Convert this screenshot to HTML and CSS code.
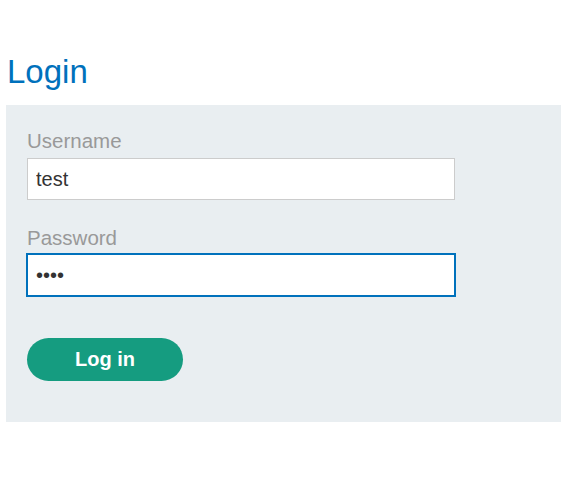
FILE: index.html
```html
<!DOCTYPE html>
<html>
<head>
<meta charset="utf-8">
<link rel="stylesheet" href="styles.css">
</head>
<body>
<div class="page">
  <h1 class="title">Login</h1>
  <form class="panel">
    <label class="label" for="u">Username</label>
    <input class="field" id="u" type="text" value="test">
    <label class="label label-2" for="p">Password</label>
    <input class="field field-focus" id="p" type="password" value="test">
    <button class="btn" type="button">Log in</button>
  </form>
</div>
</body>
</html>
```
FILE: styles.css
```css
html, body {
  margin: 0;
  padding: 0;
  background: #fff;
  font-family: "Liberation Sans", Arial, sans-serif;
}
.page {
  padding: 0 0 0 6px;
}
.title {
  margin: 0;
  padding-top: 52px;
  font-size: 33px;
  font-weight: normal;
  line-height: 40px;
  color: #0071bc;
  padding-left: 1px;
  height: 53px;
}
.panel {
  background: #e9eef1;
  padding: 24px 21px 41px;
  display: flex;
  flex-direction: column;
  align-items: flex-start;
}
.label {
  font-size: 20.5px;
  line-height: 24px;
  color: #999;
  margin-bottom: 5px;
}
.label-2 {
  margin-top: 26px;
  margin-bottom: 4px;
}
.field {
  box-sizing: border-box;
  width: 428px;
  height: 42px;
  margin: 0;
  border: 1px solid #ccc;
  background: #fff;
  padding: 0 8px;
  font-family: "Liberation Sans", Arial, sans-serif;
  font-size: 20px;
  color: #333;
  outline: none;
}
.field-focus {
  border: 2px solid #0071bc;
  width: 430px;
  height: 44px;
  margin-left: -1px;
  margin-top: -1px;
}
.btn {
  margin-top: 41px;
  width: 156px;
  height: 43px;
  border: 0;
  border-radius: 22px;
  background: #159c80;
  color: #fff;
  font-family: "Liberation Sans", Arial, sans-serif;
  font-size: 20px;
  font-weight: bold;
  padding: 0;
}
```
